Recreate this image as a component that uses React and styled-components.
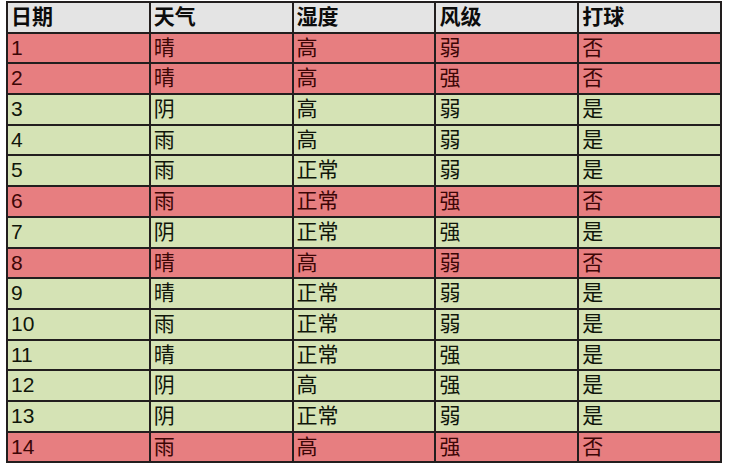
import React from 'react'
import styled, { createGlobalStyle } from 'styled-components'

const GlobalStyle = createGlobalStyle`
  html, body {
    margin: 0;
    padding: 0;
    background: #ffffff;
  }
`

const Page = styled.div`
  padding: 1px 9px 0 6px;
`

const Table = styled.table`
  width: 716px;
  border-collapse: collapse;
  table-layout: fixed;
  font-family: "Liberation Sans", Arial, "Noto Sans CJK SC", sans-serif;
  font-size: 21px;
`

const Row = styled.tr`
  height: 30.7px;
  background: ${props =>
    props.kind === 'head' ? '#e4e4e4' : props.kind === 'no' ? '#e77e80' : '#d5e3b5'};
  color: ${props => (props.kind === 'no' ? '#3c0606' : '#10160a')};
`

const Cell = styled.td`
  border: 2px solid #221e1e;
  padding: 1px 3px 0;
  vertical-align: top;
  text-align: left;
  line-height: 25px;
  white-space: nowrap;
`

const HeadCell = styled(Cell).attrs({ as: 'th' })`
  font-weight: bold;
  color: #0c0c0c;
`

const header = ['日期', '天气', '湿度', '风级', '打球']

const rows = [
  ['1', '晴', '高', '弱', '否'],
  ['2', '晴', '高', '强', '否'],
  ['3', '阴', '高', '弱', '是'],
  ['4', '雨', '高', '弱', '是'],
  ['5', '雨', '正常', '弱', '是'],
  ['6', '雨', '正常', '强', '否'],
  ['7', '阴', '正常', '强', '是'],
  ['8', '晴', '高', '弱', '否'],
  ['9', '晴', '正常', '弱', '是'],
  ['10', '雨', '正常', '弱', '是'],
  ['11', '晴', '正常', '强', '是'],
  ['12', '阴', '高', '强', '是'],
  ['13', '阴', '正常', '弱', '是'],
  ['14', '雨', '高', '强', '否'],
]

export default function App() {
  return (
    <Page>
      <GlobalStyle />
      <Table>
        <thead>
          <Row kind="head">
            {header.map(h => (
              <HeadCell key={h}>{h}</HeadCell>
            ))}
          </Row>
        </thead>
        <tbody>
          {rows.map(r => (
            <Row key={r[0]} kind={r[4] === '否' ? 'no' : 'yes'}>
              {r.map((c, i) => (
                <Cell key={i}>{c}</Cell>
              ))}
            </Row>
          ))}
        </tbody>
      </Table>
    </Page>
  )
}
